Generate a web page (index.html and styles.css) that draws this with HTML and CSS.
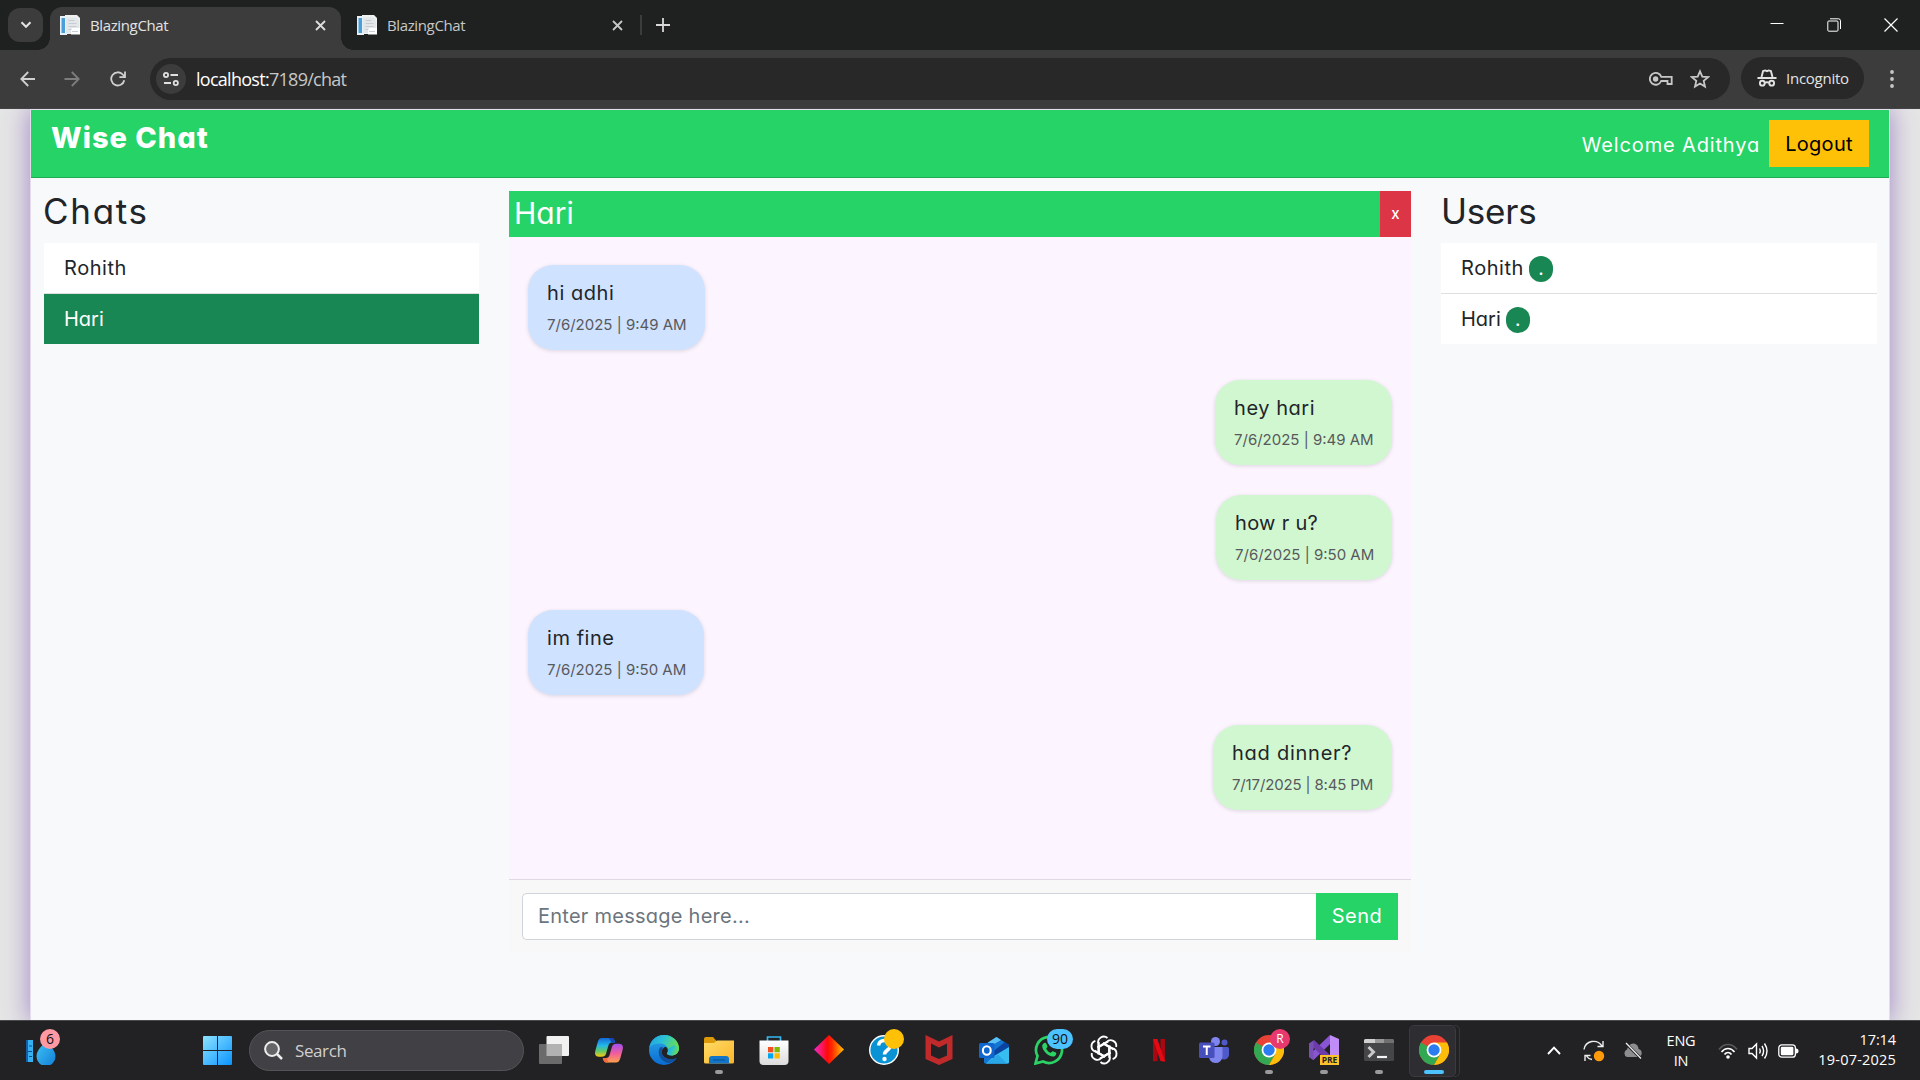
FILE: index.html
```html
<!DOCTYPE html>
<html lang="en">
<head>
<meta charset="utf-8">
<title>BlazingChat</title>
<link rel="stylesheet" href="styles.css">
</head>
<body>
<svg class="defs" width="0" height="0" aria-hidden="true">
  <defs>
    <linearGradient id="win" x1="0" y1="0" x2="1" y2="1"><stop offset="0" stop-color="#8ee4ff"/><stop offset="1" stop-color="#0a93ff"/></linearGradient>
    <linearGradient id="drop" x1="0" y1="0" x2="1" y2="1"><stop offset="0" stop-color="#3fc4f5"/><stop offset="1" stop-color="#1480d8"/></linearGradient>
    <linearGradient id="copA" x1="0" y1="0" x2="0" y2="1"><stop offset="0" stop-color="#1368d8"/><stop offset=".4" stop-color="#23b7e8"/><stop offset=".7" stop-color="#62c965"/><stop offset="1" stop-color="#f6c912"/></linearGradient>
    <linearGradient id="copB" x1="0" y1="0" x2="0" y2="1"><stop offset="0" stop-color="#a24ff0"/><stop offset=".5" stop-color="#ef5da0"/><stop offset="1" stop-color="#ffa04a"/></linearGradient>
    <linearGradient id="edgeA" x1="0" y1="0" x2="1" y2=".4"><stop offset="0" stop-color="#1f9be8"/><stop offset=".5" stop-color="#2cc3d2"/><stop offset="1" stop-color="#6be04c"/></linearGradient>
    <linearGradient id="edgeB" x1="0" y1="0" x2="0" y2="1"><stop offset="0" stop-color="#2ba7e8"/><stop offset="1" stop-color="#0a6cd0"/></linearGradient>
    <linearGradient id="fold" x1="0" y1="0" x2="1" y2="1"><stop offset="0" stop-color="#ffdc67"/><stop offset="1" stop-color="#fbb52a"/></linearGradient>
    <linearGradient id="dia"><stop offset="0" stop-color="#f02ad0"/><stop offset=".45" stop-color="#ff0a0a"/><stop offset=".6" stop-color="#ff2a00"/><stop offset="1" stop-color="#ffc400"/></linearGradient>
    <linearGradient id="bag" x1="0" y1="0" x2="0" y2="1"><stop offset="0" stop-color="#fff"/><stop offset="1" stop-color="#dcdcdc"/></linearGradient>
    <symbol id="favicon" viewBox="0 0 20 20">
      <path d="M5 0h12l3 3v16H5z" fill="#eef0f2"/><path d="M0 1h7v19H0z" fill="#e8f1f7"/><path d="M1.500 3h3.500v15H1.500z" fill="#4a9fd8"/><path d="M6 2.500h10l3 3V18H6z" fill="#e4e7ea"/><path d="M8.500 5.500h6M8.500 8.500h8M8.500 11.500h8M8.500 14.500h3" stroke="#c6ccd2"/><path d="M12 13h8v6.500h-9V16z" fill="#fff"/><path d="M12 16.500h6" stroke="#c9d0d8"/>
    </symbol>
    <symbol id="chrome" viewBox="0 0 30 30">
      <circle cx="15" cy="15" r="15" fill="#e94235"/>
      <path d="M15 15 2 7.500A15 15 0 0 0 15 30L21.500 18.800z" fill="#33a852"/>
      <path d="M15 7.500h13A15 15 0 0 1 15 30l6.500-11.200z" fill="#fbbc0a"/>
      <circle cx="15" cy="15" r="7.400" fill="#fff"/><circle cx="15" cy="15" r="5.700" fill="#2b7cf0"/>
    </symbol>
  </defs>
</svg>

<div class="tabstrip">
  <div class="tab-search"><svg width="12" height="8" viewBox="0 0 12 8"><path d="M1.500 1.200 6 5.800l4.500-4.600" fill="none" stroke="#e3e3e3" stroke-width="2"/></svg></div>
  <div class="tab tab-active">
    <svg class="fav" width="20" height="20"><use href="#favicon"/></svg>
    <span class="tab-title">BlazingChat</span>
    <svg width="11" height="11" viewBox="0 0 11 11"><path d="m1 1 9 9m0-9-9 9" stroke="#dedede" stroke-width="1.800"/></svg>
  </div>
  <div class="tab">
    <svg class="fav" width="20" height="20"><use href="#favicon"/></svg>
    <span class="tab-title">BlazingChat</span>
    <svg width="11" height="11" viewBox="0 0 11 11"><path d="m1 1 9 9m0-9-9 9" stroke="#c7c7c7" stroke-width="1.800"/></svg>
  </div>
  <div class="tab-divider"></div>
  <svg class="plus" width="14" height="14" viewBox="0 0 14 14"><path d="M7 0v14M0 7h14" stroke="#d8d8d8" stroke-width="1.800"/></svg>
  <div class="window-controls">
    <svg width="14" height="14" viewBox="0 0 14 14"><path d="M.5 5.500h13" stroke="#fff"/></svg>
    <svg width="14" height="14" viewBox="0 0 14 14" fill="none" stroke="#fff"><rect x=".8" y="3" width="10.200" height="10.200" rx="1"/><path d="M3 .8h8.500a2 2 0 0 1 2 2V11"/></svg>
    <svg width="14" height="14" viewBox="0 0 14 14"><path d="m.5.5 13 13m0-13-13 13" stroke="#fff" stroke-width="1.200"/></svg>
  </div>
</div>

<div class="toolbar">
  <svg class="nav-icon" width="16" height="16" viewBox="0 0 16 16" fill="none" stroke="#d0d0d0" stroke-width="1.800"><path d="M15 8H1.500M8.200 1 1.300 8l6.900 7"/></svg>
  <svg class="nav-icon" width="16" height="16" viewBox="0 0 16 16" fill="none" stroke="#7d7d7d" stroke-width="1.800"><path d="M.5 8h14M7.800 1l6.900 7-6.900 7"/></svg>
  <svg class="nav-icon" width="16" height="16" viewBox="0 0 16 16" fill="none" stroke="#d0d0d0" stroke-width="1.800"><path d="M14.300 9.300A6.600 6.600 0 1 1 12.800 3.500L15 5.800M15 .5v5.600H9.400"/></svg>
  <div class="omnibox">
    <div class="site-info"><svg width="16" height="14" viewBox="0 0 16 14" fill="none" stroke="#e0e0e0" stroke-width="1.800"><circle cx="3" cy="3" r="2.100"/><path d="M7.500 3H15M1 11h7"/><circle cx="12.800" cy="11" r="2.100"/></svg></div>
    <span class="url"><b>localhost:</b>7189/chat</span>
    <svg class="key" width="24" height="14" viewBox="0 0 24 14" fill="none" stroke="#c7c7c7" stroke-width="1.800"><path d="M12.300 4.900H22.700v7.100h-4.200V9h-6.300a5.900 5.900 0 1 1 .1-4.100z"/><circle cx="6.600" cy="7" r="2.700" fill="#c7c7c7" stroke="none"/></svg>
    <svg width="20" height="20" viewBox="0 0 20 20" fill="none" stroke="#c7c7c7" stroke-width="1.800"><path d="m10 2.300 2.300 5.300 5.800.5-4.400 3.800 1.300 5.700-5-3-5 3 1.300-5.700-4.400-3.800 5.800-.5z"/></svg>
  </div>
  <div class="incognito">
    <svg width="20" height="18" viewBox="0 0 20 18" fill="none" stroke="#e3e3e3" stroke-width="1.900"><path d="M.5 9h19M4.500 8l1.600-6 2.200-.6 1.700.7 1.700-.7 2.200.6 1.600 6"/><circle cx="5.300" cy="14.200" r="2.400"/><circle cx="14.700" cy="14.200" r="2.400"/><path d="M7.800 13.700q2.200-1 4.400 0"/></svg>
    <span>Incognito</span>
  </div>
  <svg class="menu-dots" width="4" height="18" viewBox="0 0 4 18" fill="#c7c7c7"><circle cx="2" cy="2" r="1.900"/><circle cx="2" cy="9" r="1.900"/><circle cx="2" cy="16" r="1.900"/></svg>
</div>

<div class="viewport">
  <div class="app">
    <header class="app-header">
      <h1 class="brand">Wise Chat</h1>
      <span class="welcome">Welcome Adithya</span>
      <button class="logout">Logout</button>
    </header>
    <div class="columns">
      <aside class="side">
        <h2 class="side-title">Chats</h2>
        <ul class="list">
          <li class="list-item"><span>Rohith</span></li>
          <li class="list-item list-item-active"><span>Hari</span></li>
        </ul>
      </aside>
      <main class="chat">
        <div class="chat-header"><h3 class="chat-name">Hari</h3><button class="chat-close">x</button></div>
        <div class="messages">
          <div class="bubble bubble-in"><p class="msg">hi adhi</p><p class="time">7/6/2025 | 9:49 AM</p></div>
          <div class="bubble bubble-out"><p class="msg">hey hari</p><p class="time">7/6/2025 | 9:49 AM</p></div>
          <div class="bubble bubble-out bubble-slim"><p class="msg">how r u?</p><p class="time">7/6/2025 | 9:50 AM</p></div>
          <div class="bubble bubble-in bubble-slim"><p class="msg">im fine</p><p class="time">7/6/2025 | 9:50 AM</p></div>
          <div class="bubble bubble-out bubble-wide"><p class="msg">had dinner?</p><p class="time">7/17/2025 | 8:45 PM</p></div>
        </div>
        <div class="composer">
          <input class="composer-input" type="text" placeholder="Enter message here...">
          <button class="send">Send</button>
        </div>
      </main>
      <aside class="side">
        <h2 class="side-title">Users</h2>
        <ul class="list">
          <li class="list-item"><span>Rohith</span><i class="online">.</i></li>
          <li class="list-item"><span>Hari</span><i class="online">.</i></li>
        </ul>
      </aside>
    </div>
  </div>
</div>

<div class="taskbar">
  <div class="widget">
    <svg width="32" height="28" viewBox="0 0 32 28"><path d="M1 3h7v22H1z" fill="#36b0f0"/><path d="M1 3h2v22H1z" fill="#1560a8"/><path d="M4 9h3M3 14.500h4M4 19.500h3" stroke="#0f4f90" stroke-width="1.200"/><path d="M21 3c2 5 9.500 9 9.500 16.500a9.500 9.500 0 0 1-19 0C11.500 12 19 8 21 3z" fill="url(#drop)"/></svg>
    <span class="badge badge-pink">6</span>
  </div>
  <svg class="start" width="29" height="29" viewBox="0 0 29 29"><path d="M0 1a1 1 0 0 1 1-1h13v14H0zM15 0h13a1 1 0 0 1 1 1v13H15zM0 15h14v14H1a1 1 0 0 1-1-1zM15 15h14v13a1 1 0 0 1-1 1H15z" fill="url(#win)"/></svg>
  <div class="search">
    <svg width="19" height="19" viewBox="0 0 19 19" fill="none" stroke="#eee" stroke-width="2"><circle cx="8" cy="8" r="6.900" fill="#66666a"/><path d="m13 13 5 5" stroke-width="2.500"/></svg>
    <span>Search</span>
  </div>
  <div class="apps">
    <div class="task"><svg width="30" height="30" viewBox="0 0 30 30"><rect x="7.500" y="1" width="22.500" height="20" rx="1" fill="#f1f1f1"/><rect y="9" width="23" height="20" rx="1" fill="#6b6b6b"/><path d="M7.500 9H23v12H7.500z" fill="#b2b2b2"/></svg></div>
    <div class="task"><svg width="30" height="30" viewBox="0 0 30 30"><path d="M8 3h9c3 0 3.500 2 4.200 4.500H18c-2 0-3 1.200-3.600 3l-2.300 8c-.7 2.300-2 3.200-4.500 3.200H5c-4 0-4.500-3-3.500-6.500l2.200-8C4.500 4.400 5.700 3 8 3z" fill="url(#copA)"/><path d="M22 27.500h-9c-3 0-3.500-2-4.200-4.500H12c2 0 3-1.200 3.600-3l2.300-8c.7-2.300 2-3.200 4.500-3.200H25c4 0 4.500 3 3.500 6.500l-2.200 8c-.8 2.800-2 4.200-4.300 4.200z" fill="url(#copB)"/><path d="M8.800 23c.7 2.600 1.500 4.500 4.200 4.500h2c-1.500-.8-1.500-3-2.300-4.500z" fill="#f36a3d"/><path d="M21.200 7.500C20.500 5 19.700 3 17 3h-2.500c1.500.8 2 2.500 2.800 4.500z" fill="#1645b8"/></svg></div>
    <div class="task"><svg width="30" height="30" viewBox="0 0 30 30"><circle cx="15" cy="15" r="15" fill="url(#edgeB)"/><path d="M.2 13C1.500 5 7.500 0 15 0c9 0 15 6.500 15 13 0 5-4 7.500-7.500 7.500-3 0-5-1-4.500-2.500 1.500-1.200 1.500-3.500.8-5C17.500 10.500 14.500 8.500 11 8.500 6 8.500 1.500 10.500.2 13z" fill="url(#edgeA)"/><path d="M11.500 12C8 16 9.500 24 17 27.500c4 1.500 8.500-1 10.500-4.500C23 25.500 14 24.500 12.700 18c-.4-2.500.3-4 1.300-5.500z" fill="#10509c"/><path d="M12.700 17c0-3 2-5 4.300-5 1.800 1 2.400 4.500 1 6-.5 1.500 1.500 2.500 4.500 2.500 2.800 0 7-1.500 7.500-6V23h-2.500C21 26 13 23 12.700 17z" fill="#222124"/><path d="M18 18c-.5 1.500 1.500 2.500 4.500 2.500C26 20.500 30 18 30 13l-5-3-6 4c.5 1.500.2 3-1 4z" fill="url(#edgeA)"/></svg></div>
    <div class="task"><svg width="30" height="30" viewBox="0 0 30 30"><path d="M0 4a2 2 0 0 1 2-2h7l3.500 4H30v8H0z" fill="#dc9a0b"/><path d="M0 8h10l3-2.500h17V27a1.500 1.500 0 0 1-1.500 1.500h-27A1.500 1.500 0 0 1 0 27z" fill="url(#fold)"/><path d="M5 28.500V24a3 3 0 0 1 3-3h14a3 3 0 0 1 3 3v4.500z" fill="#1175c8"/><path d="M9 25h12" stroke="#0a4e91"/></svg><span class="dot"></span></div>
    <div class="task"><svg width="30" height="30" viewBox="0 0 30 30"><path d="M8.500 6V2h13v4" fill="none" stroke="#36b7f0" stroke-width="1.700"/><path d="M.5 5.500h29V26a4 4 0 0 1-4 4h-21a4 4 0 0 1-4-4z" fill="url(#bag)"/><path d="M9 12h5.300v5.300H9z" fill="#f25022"/><path d="M15.500 12h5.300v5.300h-5.300z" fill="#7fba00"/><path d="M9 18.300h5.300v5.200H9z" fill="#00a4ef"/><path d="M15.500 18.300h5.300v5.200h-5.300z" fill="#ffb900"/></svg></div>
    <div class="task"><svg width="30" height="30" viewBox="0 0 30 30"><path d="m15 0 15 14.500L15 29 0 14.500z" fill="url(#dia)"/></svg></div>
    <div class="task"><svg width="30" height="30" viewBox="0 0 30 30"><circle cx="15" cy="15" r="14.300" fill="#0a93d4" stroke="#fff" stroke-width="1.400"/><path d="M9.500 10.500C10 6.500 13 5.500 15.500 5.500c3.500 0 6 2 6 5 0 4.500-6 4.500-6 9" fill="none" stroke="#fff" stroke-width="3.500"/><circle cx="15.500" cy="24" r="2.200" fill="#fff"/></svg><span class="badge badge-amber"></span></div>
    <div class="task"><svg width="30" height="30" viewBox="0 0 30 30"><path d="m1.500 0 13.500 6.500L28.500 0v24L15 30 1.500 24z" fill="#c12a2b"/><path d="m7 8.500 8 4 8-4v12L15 24l-8-3.500z" fill="#222124"/></svg></div>
    <div class="task"><svg width="30" height="30" viewBox="0 0 30 30"><path d="M5 10 17.500 2 30 10v17a1.500 1.500 0 0 1-1.500 1.500h-22A1.500 1.500 0 0 1 5 27z" fill="#1376d3"/><path d="m9 7.500 8.500-5.500L22 5 10 12z" fill="#5bc1f5"/><path d="m26 7-14 11 2 4L30 13v-3z" fill="#0b43a0"/><path d="m30 12-15 9-8 7.500h21.500A1.500 1.500 0 0 0 30 27z" fill="#38bdf0"/><path d="m7 28.500 12-9 9 9z" fill="#28a6e5"/><rect y="8" width="15.500" height="15" rx="1.500" fill="#0f66cf"/><ellipse cx="7.800" cy="15.500" rx="3.900" ry="4.300" fill="none" stroke="#fff" stroke-width="2.100"/></svg></div>
    <div class="task"><svg width="30" height="30" viewBox="0 0 30 30"><path d="M1.500 28.500 3.500 21A13 13 0 1 1 9 26.500z" fill="none" stroke="#2bd366" stroke-width="2.700"/><path d="M9.500 8.500c1-1 2.500-.8 3 .5l1 2.500c.2.700-1 1.500-1.300 2.200 1 2 2.500 3.300 4.500 4.100.7-.4 1.400-1.800 2.100-1.600l3 1.400c1 .5.500 2.500-.8 3.300C17 23.500 8 16.500 8.200 11c0-1 .5-1.800 1.300-2.500z" fill="#2bd366"/></svg><span class="badge badge-blue">90</span></div>
    <div class="task"><svg width="30" height="30" viewBox="-15 -15 30 30" fill="none" stroke="#fff" stroke-width="1.900"><path id="pt" d="M-5.600 4.500V-6.200A5.600 5.600 0 0 1 3.500-12M-5.600-2.800 0-6l9.500 5.400"/><use href="#pt" transform="rotate(60)"/><use href="#pt" transform="rotate(120)"/><use href="#pt" transform="rotate(180)"/><use href="#pt" transform="rotate(240)"/><use href="#pt" transform="rotate(300)"/></svg></div>
    <div class="task"><svg width="30" height="30" viewBox="0 0 30 30"><path d="M9 4h4.500v22L9 26.500zM16.500 4H21v22.500l-4.500-.5z" fill="#a90810"/><path d="M9 4h4.300L21 26.500l-4.500-.5z" fill="#e50914"/></svg></div>
    <div class="task"><svg width="30" height="30" viewBox="0 0 30 30"><circle cx="16.500" cy="6.500" r="4.500" fill="#7f85ee"/><circle cx="25.500" cy="7.500" r="3" fill="#5059c9"/><path d="M21 12h7.500a1.500 1.500 0 0 1 1.500 1.500v6c0 4-4 6-8 4.500z" fill="#5059c9"/><path d="M10 12h13.500v9.500A7 7 0 0 1 16.500 28c-4 0-6.500-3-6.500-7z" fill="#7f85ee"/><rect y="7.500" width="15.500" height="15.500" rx="1.500" fill="#474fbc"/><path d="M4 11.500h7.500M7.750 11.500V20" stroke="#fff" stroke-width="2"/></svg></div>
    <div class="task"><svg width="30" height="30"><use href="#chrome"/></svg><span class="badge badge-rose">R</span><span class="dot"></span></div>
    <div class="task"><svg width="30" height="30" viewBox="0 0 30 30"><path d="m21 0 9 4v20l-9 5z" fill="#c08cf5"/><path d="M21 0v9L4.500 25 0 22v-2z" fill="#8a55d2"/><path d="m21 29-16-16L0 17.500v-9L5 5l16 15z" fill="#6c3cab"/><path d="M0 8.500 4.500 6v19L0 22z" fill="#7951b4"/><rect x="11" y="20" width="19" height="10" fill="#fdc22c"/></svg><span class="pre">PRE</span><span class="dot"></span></div>
    <div class="task"><svg width="30" height="30" viewBox="0 0 30 30"><rect y="4" width="30" height="22" rx="1.500" fill="#444647"/><path d="M0 8V5.500A1.500 1.500 0 0 1 1.500 4H11v4z" fill="#d0d0d0"/><path d="M11 4h9v4h-9z" fill="#989898"/><path d="M20 4h8.500A1.500 1.500 0 0 1 30 5.500V8H20z" fill="#707070"/><path d="m4.500 12 5 5-5 5" fill="none" stroke="#c9c9c9" stroke-width="3"/><path d="M13 22h10" stroke="#f5f5f5" stroke-width="2.200"/></svg><span class="dot"></span></div>
    <div class="task task-current"><svg width="30" height="30"><use href="#chrome"/></svg><span class="dot dot-active"></span></div>
  </div>
  <div class="tray">
    <svg width="14" height="9" viewBox="0 0 14 9"><path d="m1 8 6-6.300L13 8" fill="none" stroke="#fff" stroke-width="1.900"/></svg>
    <svg class="sync" width="22" height="22" viewBox="0 0 22 22" fill="none" stroke="#eee" stroke-width="1.400"><path d="M1 9.500C2.500.5 14-1.500 19 6M20 1v5.500h-5.500M9 19.500C6.500 19 4.500 18 3 15.500M2 21v-5.500h5.500"/><circle cx="16" cy="16" r="5.200" fill="#ff9b0a" stroke="none"/></svg>
    <svg class="cloud" width="20" height="18" viewBox="0 0 20 18"><path d="M4 15a4 4 0 0 1 0-7.500C5 3 8 1 11 1.500c3 .5 4.500 3 4.500 5.500A4.200 4.200 0 0 1 16 15z" fill="#8d8d90"/><path d="m3 1.500 15 15" stroke="#222124" stroke-width="3"/><path d="m3 1 15 15.500" stroke="#eee" stroke-width="1.300"/></svg>
    <div class="lang"><span>ENG</span><span>IN</span></div>
    <svg class="wifi" width="20" height="16" viewBox="0 0 20 16" fill="none" stroke="#fff" stroke-width="1.700"><path d="M1 6.500C6-.2 14-.2 19 6.500" stroke="#59595c"/><path d="M3.500 9C7 4.300 13 4.300 16.500 9M6.500 11.500c2-2.700 5-2.700 7 0"/><circle cx="10" cy="14" r="1.800" fill="#fff" stroke="none"/></svg>
    <svg class="vol" width="20" height="18" viewBox="0 0 20 18" fill="none" stroke="#fff" stroke-width="1.400"><path d="M1 6.500h3l4.500-4.500v14L4 11.500H1zM11.500 6.500q1.500 2.500 0 5M14 4q3.200 5 0 10M16.500 1.500q5 7.500 0 15"/></svg>
    <svg class="bat" width="21" height="14" viewBox="0 0 21 14"><rect x=".8" y=".8" width="16.600" height="12.400" rx="3" fill="none" stroke="#fff" stroke-width="1.300"/><rect x="2.800" y="2.800" width="12.600" height="8.400" rx="1.300" fill="#fff"/><path d="M18 4.500q2.500 0 2.500 2.500T18 9.500z" fill="#fff"/></svg>
    <div class="clock"><span>17:14</span><span class="date">19-07-2025</span></div>
  </div>
</div>
</body>
</html>
```
FILE: styles.css
```css
* { box-sizing: border-box; }
html, body { height: 100%; }
body {
  margin: 0;
  width: 1920px;
  height: 1080px;
  overflow: hidden;
  display: flex;
  flex-direction: column;
  font-family: Inter, "Open Sans", sans-serif;
  font-feature-settings: "cv11";
  color: #212529;
}
svg { display: block; flex: none; }
.defs { position: absolute; }
h1, h2, h3, p, ul { margin: 0; padding: 0; font-weight: 400; list-style: none; }
button { border: 0; padding: 0; font: inherit; font-feature-settings: inherit; letter-spacing: inherit; }

/* Browser chrome */
.tabstrip, .toolbar, .taskbar { font-family: "Open Sans", "Noto Sans", sans-serif; }
.tabstrip { height: 50px; background: #1f2120; display: flex; align-items: center; padding-left: 8px; }
.tab-search { width: 35px; height: 34px; border-radius: 12px; background: #3c3c3c; display: flex; align-items: center; justify-content: center; margin-right: 7px; }
.tab { position: relative; height: 43px; margin-top: 7px; width: 291px; padding: 0 15px 7px 10px; display: flex; align-items: center; color: #c7c7c7; font-size: 15px; }
.tab:not(.tab-active) { padding-left: 16px; width: 299px; }
.tab:not(.tab-active) > svg:last-child { margin-right: 2px; }
.tab-active { background: #3c3c3c; border-radius: 12px 12px 0 0; color: #e3e3e3; }
.tab-active::before, .tab-active::after { content: ""; position: absolute; bottom: 0; width: 12px; height: 12px; }
.tab-active::before { left: -12px; background: radial-gradient(circle at 0 0, transparent 11.500px, #3c3c3c 12px); }
.tab-active::after { right: -12px; background: radial-gradient(circle at 100% 0, transparent 11.500px, #3c3c3c 12px); }
.tab-title { flex: 1; margin-left: 10px; letter-spacing: -.37px; }
.tab-divider { width: 2px; height: 20px; background: #3c3c3c; }
.plus { margin-left: 14px; }
.window-controls { margin-left: auto; padding-right: 22px; display: flex; gap: 43px; }

.toolbar { height: 59px; background: #3c3c3c; display: flex; align-items: center; padding-left: 20px; border-bottom: 1px solid #444; }
.nav-icon { margin-right: 28px; }
.nav-icon:nth-child(2) { margin-right: 30px; }
.nav-icon:nth-child(3) { margin-right: 24px; }
.omnibox { width: 1580px; height: 42px; border-radius: 21px; background: #282828; display: flex; align-items: center; padding: 0 20px 0 6px; }
.site-info { width: 30px; height: 30px; border-radius: 50%; background: #3c3c3c; display: flex; align-items: center; justify-content: center; }
.url { margin-left: 10px; margin-top: -1px; font-size: 18px; letter-spacing: -.72px; color: #c7c7c7; flex: 1; }
.url b { font-weight: 400; color: #fff; }
.key { margin-right: 17px; }
.incognito { margin-left: 11px; width: 123px; height: 42px; border-radius: 21px; background: #282828; display: flex; align-items: center; padding-left: 16px; gap: 9px; font-size: 15px; letter-spacing: -.25px; color: #e3e3e3; margin-top: -2px; }
.menu-dots { margin-left: 26px; }

/* Page */
.viewport { height: 911px; background: #e5e5e5; padding: 1px 31px 0; overflow: hidden; }
.app { height: 910px; background: #f8f9fb; box-shadow: 0 0 0 1px #e5dced, 0 0 24px 2px #a48cc8; display: flex; flex-direction: column; }
.app-header { height: 68px; background: #25d366; border-bottom: 1px solid #1dac52; display: flex; align-items: flex-start; padding: 10px 20px; color: #fff; }
.brand { font-size: 29px; line-height: 35px; font-weight: 800; letter-spacing: 1px; flex: 1; }
.welcome { font-size: 20px; line-height: 50px; margin-right: 9px; letter-spacing: .85px; }
.logout { width: 100px; height: 47px; background: #ffc107; color: #000; font-size: 20px; letter-spacing: .3px; }
.columns { flex: 1; display: flex; align-items: flex-start; padding: 13px 12px 0 13px; }
.side { width: 435px; }
.side:last-child { width: 436px; }
.side-title { font-size: 35px; line-height: 41px; margin: 0 0 11px -1px; letter-spacing: 1.700px; }
.side:last-child .side-title { margin-left: 0; letter-spacing: -.2px; }
.list-item { height: 50px; background: #fff; padding-left: 20px; font-size: 20px; letter-spacing: .55px; display: flex; align-items: center; }
.list-item + .list-item { border-top: 1px solid #dfdfdf; height: 51px; letter-spacing: 0; }
.list-item-active { background: #198754; color: #fff; }
.online { width: 24px; height: 26px; border-radius: 12px; background: #198754; color: #fff; margin: 1px 0 0 5px; font: 700 15px/27px Inter, sans-serif; text-align: center; letter-spacing: 0; }
.chat { width: 902px; margin: 0 30px; }
.chat-header { height: 46px; background: #25d366; color: #fff; display: flex; align-items: center; justify-content: space-between; padding-left: 5px; }
.chat-name { font-size: 30px; line-height: 44px; margin-bottom: 2px; }
.chat-close { width: 31px; height: 46px; background: #dc3545; color: #fff; font-size: 15px; font-weight: 500; padding-bottom: 2px; }
.messages { height: 642px; background: #fcf5ff; padding: 28px 19px; display: flex; flex-direction: column; gap: 30px; }
.bubble { width: 177px; height: 85px; border-radius: 25px; padding: 14px 19px; box-shadow: 0 1px 4px rgba(0, 0, 0, .13); white-space: nowrap; }
.bubble-in { background: #cfe2ff; align-self: flex-start; }
.bubble-out { background: #d1f7d1; align-self: flex-end; }
.bubble-slim { width: 176px; }
.bubble-wide { width: 179px; }
.msg { font-size: 20px; line-height: 28px; letter-spacing: .55px; }
.time { font-size: 15px; line-height: 20px; margin-top: 8px; color: #58595c; }
.bubble-slim .msg { letter-spacing: .3px; }
.bubble-slim.bubble-in .msg { letter-spacing: .55px; }
.bubble-wide .msg { letter-spacing: .75px; }
.bubble-wide .time { letter-spacing: -.15px; }
.composer { height: 73px; border-top: 1px solid #ded9e2; background: #f8f8f8; padding: 13px; display: flex; }
.composer-input { flex: 1; height: 47px; border: 1px solid #ced4da; border-right: 0; border-radius: 5px 0 0 5px; background: #fff; padding: 0 15px 2px; font: 20px Inter, sans-serif; font-feature-settings: "cv11"; letter-spacing: .25px; }
.composer-input::placeholder { color: #6c757d; opacity: 1; }
.send { width: 82px; height: 47px; padding-bottom: 2px; background: #25d366; color: #fff; font-size: 20px; letter-spacing: .5px; }

/* Taskbar */
.taskbar { height: 60px; background: #222124; border-top: 1px solid #47494a; display: flex; align-items: center; color: #fff; }
.widget { position: relative; width: 32px; margin-left: 25px; }
.badge { position: absolute; height: 20px; min-width: 20px; border-radius: 10px; color: #111; font-size: 14px; line-height: 20px; text-align: center; }
.badge-pink { left: 15px; top: -8px; background: #ff99a4; }
.start { margin-left: 146px; }
.search { margin-left: 17px; width: 275px; height: 41px; border-radius: 21px; background: #414044; border: 1px solid #555458; display: flex; align-items: center; padding-left: 14px; gap: 12px; font-size: 17px; letter-spacing: -.4px; color: #d0d0d0; }
.apps { display: flex; height: 59px; margin-left: 2px; }
.task { position: relative; width: 55px; height: 59px; padding: 14px 0 0 13px; }
.dot { position: absolute; left: 24px; bottom: 6px; width: 8px; height: 4px; border-radius: 2px; background: #9a9a9c; }
.dot-active { left: 18px; width: 20px; background: #4cc2ff; }
.badge-amber { left: 28px; top: 8px; background: #ffc107; }
.badge-blue { left: 26px; top: 8px; width: 26px; background: #4cc2ff; }
.badge-rose { left: 29px; top: 8px; background: #e8396f; color: #fff; font-size: 12px; }
.pre { position: absolute; left: 24px; top: 34px; width: 19px; font: 700 8.500px/10px "Open Sans", sans-serif; color: #222; text-align: center; }
.task-current { z-index: 0; }
.task-current::before { content: ""; position: absolute; z-index: -1; left: 3px; top: 4px; width: 45px; height: 50px; border-radius: 5px; background: #2e2d31; border: 1px solid #3b3a3e; }
.task-current::after { content: ""; position: absolute; left: 48px; top: 4px; width: 5px; height: 50px; border-radius: 0 5px 5px 0; border: 1px solid #38373b; border-left: 0; }
.tray { margin-left: auto; margin-right: 24px; display: flex; align-items: center; font-size: 14.500px; line-height: 20px; }
.sync { margin-left: 22px; }
.cloud { margin-left: 18px; }
.lang { display: flex; flex-direction: column; align-items: center; margin-left: 23px; width: 30px; letter-spacing: -.2px; }
.wifi { margin-left: 22px; }
.vol { margin-left: 10px; }
.bat { margin-left: 10px; }
.clock { display: flex; flex-direction: column; align-items: flex-end; margin: -2px 0 0 18px; width: 79px; letter-spacing: -.1px; white-space: nowrap; }
.date { letter-spacing: .2px; }
```
